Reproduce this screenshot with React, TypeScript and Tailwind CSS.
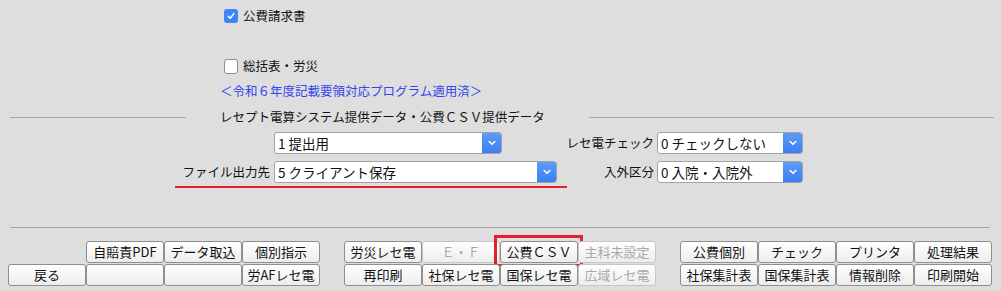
const FONT = "font-['Noto_Sans_CJK_JP','Noto_Sans',sans-serif]";

type Btn = { label: string; disabled?: boolean; mark?: boolean } | null;

const LEFT: Btn[] = [
  null,
  { label: "自賠責PDF" },
  { label: "データ取込" },
  { label: "個別指示" },
  { label: "戻る" },
  { label: "" },
  { label: "" },
  { label: "労AFレセ電" },
];

const MIDDLE: Btn[] = [
  { label: "労災レセ電" },
  { label: "Ｅ・Ｆ", disabled: true },
  { label: "公費ＣＳＶ", mark: true },
  { label: "主科未設定", disabled: true },
  { label: "再印刷" },
  { label: "社保レセ電" },
  { label: "国保レセ電" },
  { label: "広域レセ電", disabled: true },
];

const RIGHT: Btn[] = [
  { label: "公費個別" },
  { label: "チェック" },
  { label: "プリンタ" },
  { label: "処理結果" },
  { label: "社保集計表" },
  { label: "国保集計表" },
  { label: "情報削除" },
  { label: "印刷開始" },
];

function Chevron() {
  return (
    <svg width="8" height="6" viewBox="0 0 8 6" fill="none">
      <path d="M1.2 1.5 L4 4.3 L6.8 1.5" stroke="white" strokeWidth="1.6" strokeLinecap="round" strokeLinejoin="round" />
    </svg>
  );
}

function Select({ value, width }: { value: string; width: string }) {
  return (
    <div className={`${width} flex h-[22px] overflow-hidden rounded-[3px] border border-[#a3a3a3] bg-white`}>
      <div className="flex flex-1 items-center pl-[3px] text-[13.5px] text-[#111]">{value}</div>
      <div className="flex w-[19px] items-center justify-center bg-gradient-to-b from-[#5d9bf8] to-[#3a7ff2]">
        <Chevron />
      </div>
    </div>
  );
}

function Group({ items }: { items: Btn[] }) {
  return (
    <div className="grid grid-cols-[repeat(4,78px)] gap-y-[1px]">
      {items.map((b, i) =>
        b === null ? (
          <div key={i} className="h-[22px]" />
        ) : (
          <div
            key={i}
            className={`relative flex h-[22px] items-center justify-center rounded-[3px] border bg-gradient-to-b from-white to-[#ededed] text-[13px] ${
              b.disabled ? "border-[#c6c6c6] text-[#a9a9a9]" : "border-[#8f8f8f] text-[#111]"
            }`}
          >
            {b.label}
            {b.mark && (
              <div className="absolute -top-[7px] -bottom-[5px] -left-[7px] -right-[6px] border-[3px] border-[#e3202b]" />
            )}
          </div>
        )
      )}
    </div>
  );
}

export default function App() {
  return (
    <div className={`${FONT} h-[291px] w-[1001px] overflow-hidden bg-[#dedede] pt-[9px] text-[12.5px] text-[#111]`}>
      {/* checkboxes */}
      <div className="flex h-[14px] items-center gap-[5px] pl-[224px]">
        <div className="flex h-[14px] w-[14px] items-center justify-center rounded-[3px] bg-[#3d86f7]">
          <svg width="10" height="10" viewBox="0 0 10 10" fill="none">
            <path d="M2.2 5.2 L4.2 7.3 L7.9 2.6" stroke="white" strokeWidth="1.5" strokeLinecap="round" strokeLinejoin="round" />
          </svg>
        </div>
        <span>公費請求書</span>
      </div>
      <div className="mt-[36px] flex h-[15px] items-center gap-[5px] pl-[224px]">
        <div className="h-[15px] w-[14px] rounded-[3px] border border-[#8d8d8d] bg-white" />
        <span>総括表・労災</span>
      </div>

      <div className="mt-[9px] h-[16px] pl-[220px] leading-[16px] text-[#3346ec]">＜令和６年度記載要領対応プログラム適用済＞</div>

      {/* section heading */}
      <div className="mt-[10px] flex h-[16px] items-center">
        <div className="ml-[10px] h-px w-[176px] bg-[#a5a5a5]" />
        <span className="ml-[34px] leading-[16px]">レセプト電算システム提供データ・公費ＣＳＶ提供データ</span>
        <div className="ml-[44px] h-px w-[405px] bg-[#a5a5a5]" />
      </div>

      {/* selects */}
      <div className="mt-[7px] flex items-center">
        <div className="w-[274px]" />
        <Select value="1 提出用" width="w-[228px]" />
        <div className="w-[155px] pr-[3px] text-right">レセ電チェック</div>
        <Select value="0 チェックしない" width="w-[146px]" />
      </div>
      <div className="mt-[7px] flex items-center">
        <div className="w-[274px] pr-[4px] text-right">ファイル出力先</div>
        <Select value="5 クライアント保存" width="w-[283px]" />
        <div className="w-[100px] pr-[3px] text-right">入外区分</div>
        <Select value="0 入院・入院外" width="w-[146px]" />
      </div>
      <div className="ml-[175px] mt-[3px] h-[2px] w-[392px] bg-[#e3202b]" />

      <div className="ml-[10px] mt-[39px] h-px w-[980px] bg-[#a5a5a5]" />

      {/* buttons */}
      <div className="mt-[13px] flex gap-[24px] pl-[8px]">
        <Group items={LEFT} />
        <Group items={MIDDLE} />
        <Group items={RIGHT} />
      </div>
    </div>
  );
}
